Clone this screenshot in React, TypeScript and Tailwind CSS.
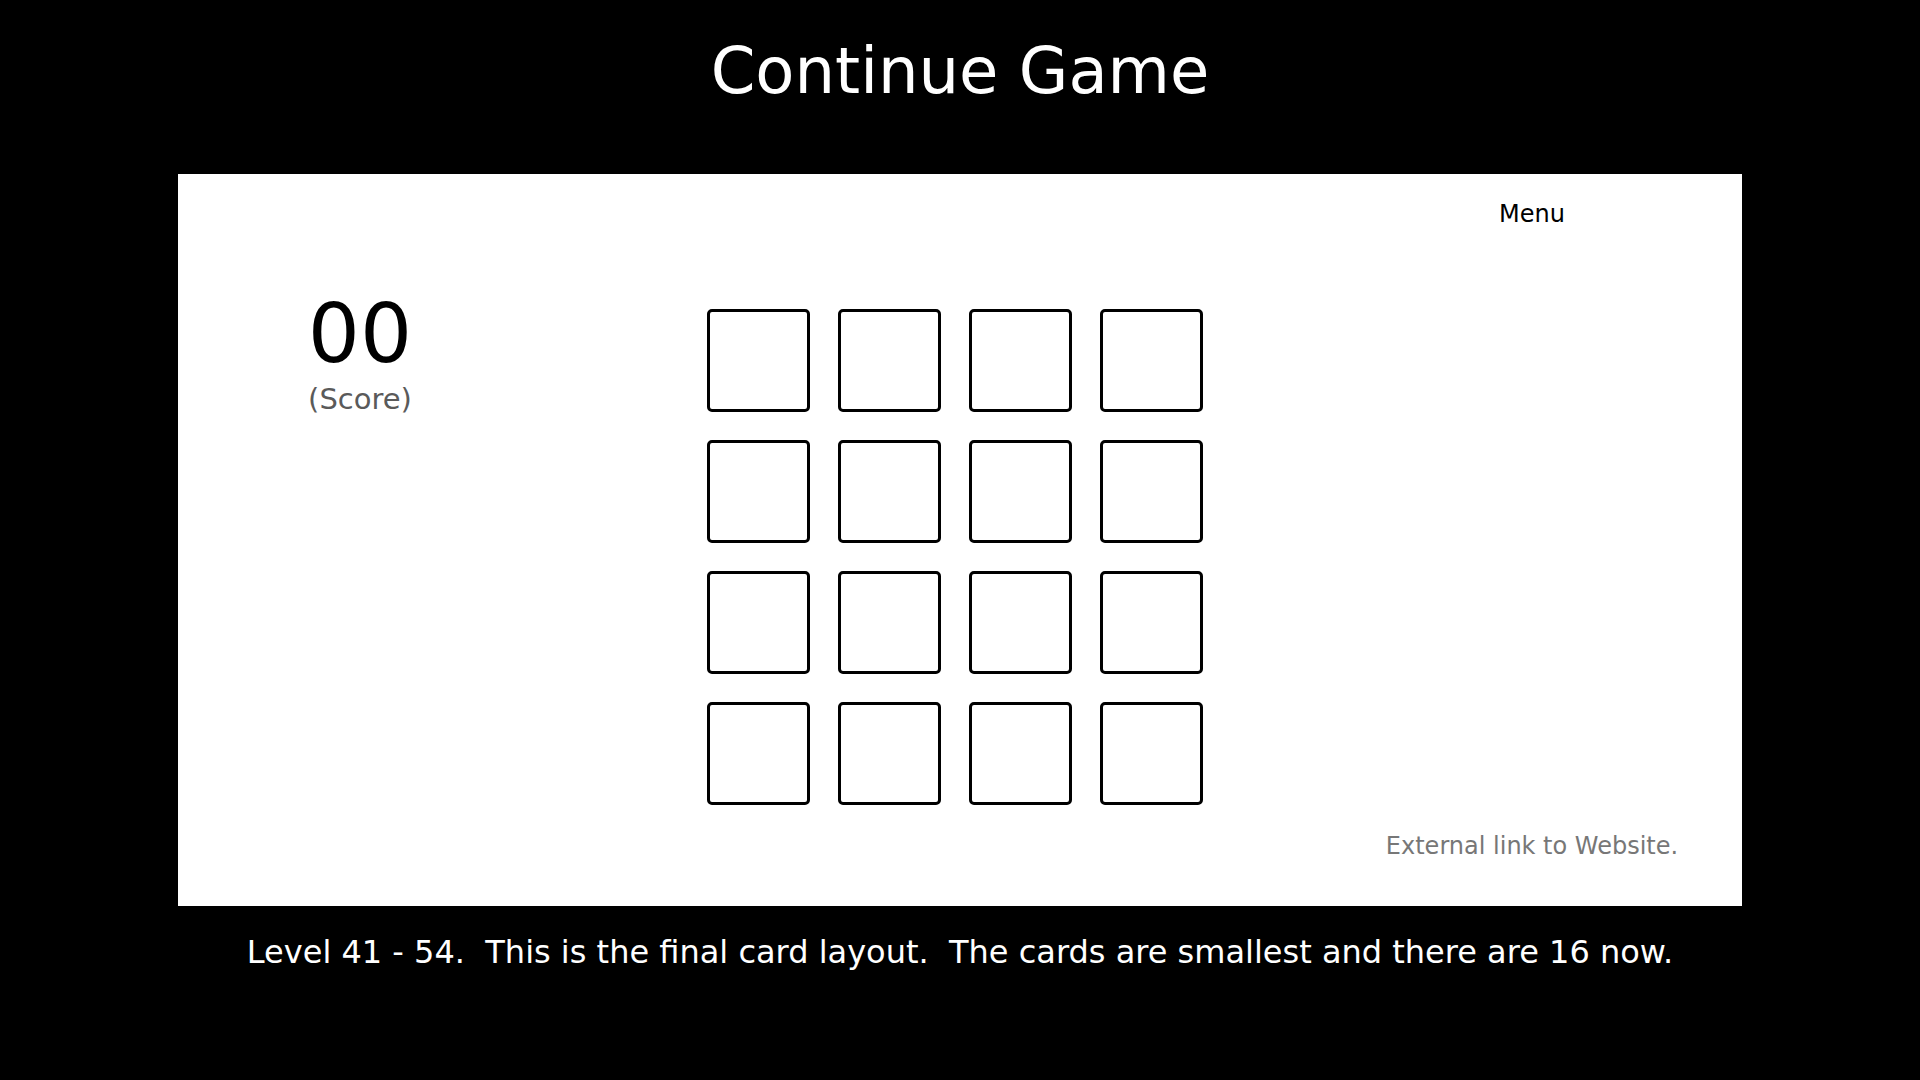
import React from "react";

const font = { fontFamily: '"DejaVu Sans", Verdana, sans-serif' };

export default function App() {
  const cards = Array.from({ length: 16 }, (_, i) => i);

  return (
    <div className="min-h-screen w-full bg-black flex flex-col items-center" style={font}>
      {/* Title */}
      <h1 className="pt-[39px] text-[64px] leading-none text-white font-normal">Continue Game</h1>

      {/* Game panel */}
      <div className="mt-[71px] w-[1564px] h-[732px] bg-white flex">
        {/* Score */}
        <div className="w-[364px] flex flex-col items-center pt-[119px]">
          <div className="text-[82px] leading-none text-black">00</div>
          <div className="mt-[10px] text-[29px] leading-none text-[#5a5a5a]">(Score)</div>
        </div>

        {/* Cards */}
        <div className="ml-[165px] pt-[135px]">
          <div className="grid grid-cols-4 gap-[28px]">
            {cards.map((c) => (
              <div key={c} className="w-[103px] h-[103px] border-[3px] border-black rounded-[5px] bg-white" />
            ))}
          </div>
        </div>

        <div className="flex-1" />

        {/* Menu / link */}
        <div className="w-[420px] flex flex-col items-center justify-between pt-[22px] pb-[42px]">
          <button className="text-[24px] text-black">Menu</button>
          <a className="text-[24px] text-[#777777]">External link to Website.</a>
        </div>
      </div>

      {/* Caption */}
      <p className="mt-[30px] text-[32px] leading-none text-white whitespace-pre">
        {"Level 41 - 54.  This is the final card layout.  The cards are smallest and there are 16 now."}
      </p>
    </div>
  );
}
